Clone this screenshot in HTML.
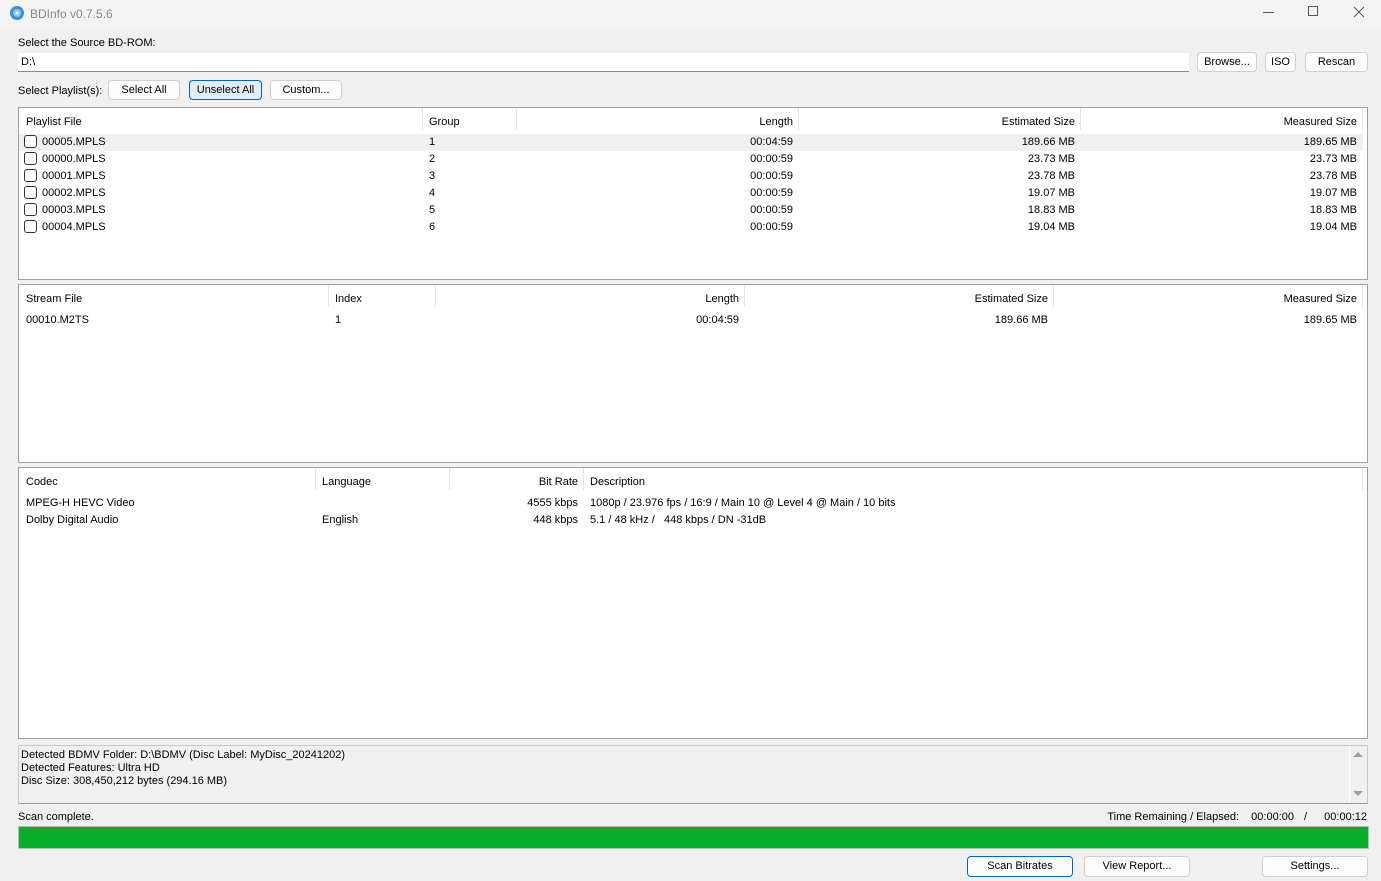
<!DOCTYPE html>
<html><head><meta charset="utf-8"><style>
*{box-sizing:border-box;margin:0;padding:0}
body{width:1381px;height:881px;background:#f0f0f0;font-family:"Liberation Sans",sans-serif;font-size:11px;color:#000;position:relative;overflow:hidden}
.a{position:absolute;white-space:nowrap}
.btn{position:absolute;background:#fdfdfd;border:1px solid #d0d0d0;border-radius:4px;text-align:center;line-height:19px;font-size:11px}
.panel{position:absolute;background:#fff;border:1px solid #a0a0a0}
.hd{position:absolute;top:0;height:22px;border-right:1px solid #e5e5e5}
.r{text-align:right}
.cb{position:absolute;width:13px;height:13px;border:1px solid #333;border-radius:3px;background:#fff}
</style></head><body>
<div class="a" style="left:0;top:0;width:1381px;height:26px;background:#f3f3f3"></div>
<svg class="a" style="left:9px;top:5px" width="16" height="16"><circle cx="8" cy="8" r="7" fill="#3a8fd8"/><circle cx="8" cy="8" r="4" fill="#8cc4f0"/><circle cx="8" cy="8" r="1.5" fill="#fff"/></svg>
<div class="a" style="left:30px;top:7px;color:#888;font-size:12px">BDInfo v0.7.5.6</div>
<div class="a" style="left:1263px;top:12px;width:11px;height:1px;background:#555"></div>
<div class="a" style="left:1308px;top:6px;width:10px;height:10px;border:1px solid #555"></div>
<svg class="a" style="left:1353px;top:6px" width="12" height="12"><path d="M1 1L11 11M11 1L1 11" stroke="#555" stroke-width="1"/></svg>

<div class="a" style="left:18px;top:37px">Select the Source BD-ROM:</div>
<div class="a" style="left:18px;top:53px;width:1171px;height:19px;background:#fff;border-bottom:1px solid #888;padding:3px 3px">D:\</div>
<div class="btn" style="left:1197px;top:52px;width:60px;height:20px">Browse...</div>
<div class="btn" style="left:1265px;top:52px;width:31px;height:20px">ISO</div>
<div class="btn" style="left:1305px;top:52px;width:63px;height:20px">Rescan</div>

<div class="a" style="left:18px;top:85px">Select Playlist(s):</div>
<div class="btn" style="left:108px;top:80px;width:72px;height:20px">Select All</div>
<div class="btn" style="left:189px;top:80px;width:73px;height:20px;background:#e0eef9;border-color:#0067c0">Unselect All</div>
<div class="btn" style="left:270px;top:80px;width:72px;height:20px">Custom...</div>

<div class="panel" style="left:18px;top:107px;width:1350px;height:173px">
 <div class="hd" style="left:0;width:404px"></div><div class="hd" style="left:404px;width:94px"></div><div class="hd" style="left:498px;width:282px"></div><div class="hd" style="left:780px;width:282px"></div><div class="hd" style="left:1062px;width:282px"></div>
 <div class="a" style="left:7px;top:8px">Playlist File</div><div class="a" style="left:410px;top:8px">Group</div>
 <div class="a r" style="right:574px;top:8px">Length</div><div class="a r" style="right:292px;top:8px">Estimated Size</div><div class="a r" style="right:10px;top:8px">Measured Size</div>
 <div class="a" style="left:0;top:26px;width:1344px;height:17px;background:#f0f0f0"></div>
</div>
<div class="panel" style="left:18px;top:284px;width:1350px;height:179px">
 <div class="hd" style="left:0;width:310px"></div><div class="hd" style="left:310px;width:107px"></div><div class="hd" style="left:417px;width:309px"></div><div class="hd" style="left:726px;width:309px"></div><div class="hd" style="left:1035px;width:309px"></div>
 <div class="a" style="left:7px;top:8px">Stream File</div><div class="a" style="left:316px;top:8px">Index</div>
 <div class="a r" style="right:628px;top:8px">Length</div><div class="a r" style="right:319px;top:8px">Estimated Size</div><div class="a r" style="right:10px;top:8px">Measured Size</div>
 <div class="a" style="left:7px;top:29px">00010.M2TS</div><div class="a" style="left:316px;top:29px">1</div>
 <div class="a r" style="right:628px;top:29px">00:04:59</div><div class="a r" style="right:319px;top:29px">189.66 MB</div><div class="a r" style="right:10px;top:29px">189.65 MB</div>
</div>
<div class="panel" style="left:18px;top:467px;width:1350px;height:272px">
 <div class="hd" style="left:0;width:297px"></div><div class="hd" style="left:297px;width:134px"></div><div class="hd" style="left:431px;width:134px"></div><div class="hd" style="left:565px;width:779px"></div>
 <div class="a" style="left:7px;top:8px">Codec</div><div class="a" style="left:303px;top:8px">Language</div><div class="a r" style="right:789px;top:8px">Bit Rate</div><div class="a" style="left:571px;top:8px">Description</div>
 <div class="a" style="left:7px;top:29px">MPEG-H HEVC Video</div><div class="a r" style="right:789px;top:29px">4555 kbps</div><div class="a" style="left:571px;top:29px">1080p / 23.976 fps / 16:9 / Main 10 @ Level 4 @ Main / 10 bits</div>
 <div class="a" style="left:7px;top:46px">Dolby Digital Audio</div><div class="a" style="left:303px;top:46px">English</div><div class="a r" style="right:789px;top:46px">448 kbps</div><div class="a" style="left:571px;top:46px">5.1 / 48 kHz /&nbsp;&nbsp; 448 kbps / DN -31dB</div>
</div>
<div class="a" style="left:18px;top:745px;width:1350px;height:59px;border:1px solid #c8c8c8;border-bottom-color:#999;background:#f0f0f0;padding:3px 2px;line-height:13px">Detected BDMV Folder: D:\BDMV (Disc Label: MyDisc_20241202)<br>Detected Features: Ultra HD<br>Disc Size: 308,450,212 bytes (294.16 MB)</div>
<div class="a" style="left:1349px;top:746px;width:1px;height:57px;background:#fff"></div>
<div class="a" style="left:1353px;top:752px;width:0;height:0;border:5px solid transparent;border-bottom-color:#a0a0a0;border-top:0"></div>
<div class="a" style="left:1353px;top:791px;width:0;height:0;border:5px solid transparent;border-top-color:#a0a0a0;border-bottom:0"></div>
<div class="a" style="left:18px;top:811px">Scan complete.</div>
<div class="a r" style="right:142px;top:811px">Time Remaining / Elapsed:</div>
<div class="a r" style="right:87px;top:811px">00:00:00</div><div class="a" style="left:1304px;top:811px">/</div><div class="a r" style="right:14px;top:811px">00:00:12</div>
<div class="a" style="left:18px;top:826px;width:1351px;height:23px;background:#06ad28;border:1px solid #bcbcbc"></div>
<div class="btn" style="left:967px;top:856px;width:106px;height:21px;border-color:#0067c0">Scan Bitrates</div>
<div class="btn" style="left:1084px;top:856px;width:106px;height:21px">View Report...</div>
<div class="btn" style="left:1262px;top:856px;width:106px;height:21px">Settings...</div>
<div class="a" style="left:0;top:0;width:1381px;height:881px">
<div class="cb" style="left:24px;top:135px"></div><div class="a" style="left:42px;top:136px">00005.MPLS</div><div class="a" style="left:429px;top:136px">1</div><div class="a r" style="right:588px;top:136px">00:04:59</div><div class="a r" style="right:306px;top:136px">189.66 MB</div><div class="a r" style="right:24px;top:136px">189.65 MB</div>
<div class="cb" style="left:24px;top:152px"></div><div class="a" style="left:42px;top:153px">00000.MPLS</div><div class="a" style="left:429px;top:153px">2</div><div class="a r" style="right:588px;top:153px">00:00:59</div><div class="a r" style="right:306px;top:153px">23.73 MB</div><div class="a r" style="right:24px;top:153px">23.73 MB</div>
<div class="cb" style="left:24px;top:169px"></div><div class="a" style="left:42px;top:170px">00001.MPLS</div><div class="a" style="left:429px;top:170px">3</div><div class="a r" style="right:588px;top:170px">00:00:59</div><div class="a r" style="right:306px;top:170px">23.78 MB</div><div class="a r" style="right:24px;top:170px">23.78 MB</div>
<div class="cb" style="left:24px;top:186px"></div><div class="a" style="left:42px;top:187px">00002.MPLS</div><div class="a" style="left:429px;top:187px">4</div><div class="a r" style="right:588px;top:187px">00:00:59</div><div class="a r" style="right:306px;top:187px">19.07 MB</div><div class="a r" style="right:24px;top:187px">19.07 MB</div>
<div class="cb" style="left:24px;top:203px"></div><div class="a" style="left:42px;top:204px">00003.MPLS</div><div class="a" style="left:429px;top:204px">5</div><div class="a r" style="right:588px;top:204px">00:00:59</div><div class="a r" style="right:306px;top:204px">18.83 MB</div><div class="a r" style="right:24px;top:204px">18.83 MB</div>
<div class="cb" style="left:24px;top:220px"></div><div class="a" style="left:42px;top:221px">00004.MPLS</div><div class="a" style="left:429px;top:221px">6</div><div class="a r" style="right:588px;top:221px">00:00:59</div><div class="a r" style="right:306px;top:221px">19.04 MB</div><div class="a r" style="right:24px;top:221px">19.04 MB</div>
</div>
</body></html>
